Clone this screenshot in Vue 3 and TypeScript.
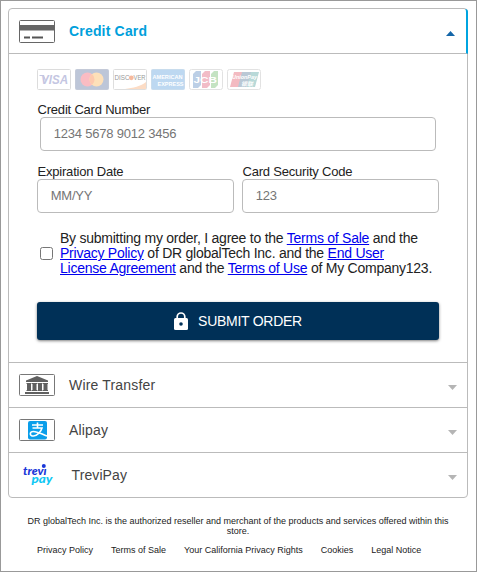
<script setup lang="ts">
import { ref } from 'vue'

const accepted = ref(false)
const links: string[] = [
  'Privacy Policy',
  'Terms of Sale',
  'Your California Privacy Rights',
  'Cookies',
  'Legal Notice',
]
</script>

<template>
  <main class="page">
    <div class="accordion">
      <header class="row active">
        <svg class="method-icon" width="36" height="24" viewBox="0 0 36 24">
          <rect x=".5" y="1.5" width="35" height="22" rx="1" fill="#fff" stroke="#666" />
          <rect x="1" y="6" width="34" height="5.500" fill="#666" />
          <path d="M5 18.500h6M13 18.500h11" stroke="#555" stroke-width="2" />
        </svg>
        <span class="name">Credit Card</span>
        <svg class="arrow" width="9" height="5" viewBox="0 0 9 5"><path d="M4.5 0L9 5H0z" fill="#1466a8" /></svg>
      </header>

      <section class="panel">
        <div class="brands">
          <svg width="34" height="21" viewBox="0 0 34 21">
            <rect x=".5" y=".5" width="33" height="20" rx="1" fill="#fff" stroke="#dcdcdc" />
            <text class="visa" x="4" y="15" textLength="27" lengthAdjust="spacingAndGlyphs">VISA</text>
            <path d="M2.500 6.500h4l2 5" fill="none" stroke="#c4c6e2" stroke-width="1.2" />
          </svg>
          <svg width="34" height="21" viewBox="0 0 34 21">
            <rect x=".5" y=".5" width="33" height="20" rx="1" fill="#bdc6d8" stroke="#c4cad8" />
            <circle cx="12.5" cy="10.5" r="7" fill="#fabcc3" />
            <circle cx="21.5" cy="10.5" r="7" fill="#fde0b9" />
            <path d="M17 5.1a7 7 0 0 1 0 10.8a7 7 0 0 1 0-10.8" fill="#fdc9ae" />
          </svg>
          <svg width="34" height="21" viewBox="0 0 34 21">
            <rect x=".5" y=".5" width="33" height="20" rx="1" fill="#fff" stroke="#dedede" />
            <path d="M33 13C28 17 20 19 12 20h21z" fill="#fcdcc5" />
            <text class="discover" x="1.5" y="11" textLength="15" lengthAdjust="spacingAndGlyphs">DISC</text>
            <circle cx="18.3" cy="8.8" r="2.4" fill="#f6b99d" />
            <text class="discover" x="20.5" y="11" textLength="12" lengthAdjust="spacingAndGlyphs">VER</text>
          </svg>
          <svg width="34" height="21" viewBox="0 0 34 21">
            <rect x=".5" y=".5" width="33" height="20" rx="1" fill="#bdd8f1" stroke="#c8dced" />
            <text class="amex" x="1.5" y="9.5" textLength="30" lengthAdjust="spacingAndGlyphs">AMERICAN</text>
            <text class="amex" x="6.5" y="17" textLength="26" lengthAdjust="spacingAndGlyphs">EXPRESS</text>
          </svg>
          <svg width="34" height="21" viewBox="0 0 34 21">
            <rect x=".5" y=".5" width="33" height="20" rx="2" fill="#fff" stroke="#e2e2e2" />
            <path d="M7 2h5v14l-3 3H4V5z" fill="#bccfe6" />
            <path d="M16 2h5v14l-3 3h-5V5z" fill="#f2bcc7" />
            <path d="M25 2h4v14l-3 3h-4V5z" fill="#c4e3c2" />
            <text class="jcb" x="4.500" y="14" textLength="23.500" lengthAdjust="spacingAndGlyphs">JCB</text>
          </svg>
          <svg width="34" height="21" viewBox="0 0 34 21">
            <rect x=".5" y=".5" width="33" height="20" rx="2" fill="#fff" stroke="#e2e2e2" />
            <path d="M7 3h9l-4 15H3z" fill="#f3bac1" />
            <path d="M15 3h10l-4 15H11z" fill="#bac8d5" />
            <path d="M24 3h8l-4 15h-8z" fill="#b8d9d8" />
            <text class="union" x="5" y="10" textLength="25" lengthAdjust="spacingAndGlyphs">UnionPay</text>
            <text class="union" x="14" y="16.500" textLength="12" lengthAdjust="spacingAndGlyphs">银联</text>
          </svg>
        </div>

        <label class="field number">
          <span>Credit Card Number</span>
          <input type="text" placeholder="1234 5678 9012 3456" />
        </label>
        <div class="pair">
          <label class="field">
            <span>Expiration Date</span>
            <input type="text" placeholder="MM/YY" />
          </label>
          <label class="field">
            <span>Card Security Code</span>
            <input type="text" placeholder="123" />
          </label>
        </div>

        <div class="consent">
          <input v-model="accepted" type="checkbox" />
          <p>
            By submitting my order, I agree to the <a href="#">Terms of Sale</a> and the<br />
            <a href="#">Privacy Policy</a> of DR globalTech Inc. and the <a href="#">End User</a><br />
            <a href="#">License Agreement</a> and the <a href="#">Terms of Use</a> of My Company123.
          </p>
        </div>

        <button class="submit" type="button">
          <svg width="14" height="18" viewBox="0 0 14 18">
            <path d="M3.2 7V4.8a3.8 3.8 0 0 1 7.6 0V7" fill="none" stroke="#fff" stroke-width="1.7" />
            <rect y="6" width="14" height="12" rx="1.5" fill="#fff" />
            <circle cx="7" cy="12" r="1.8" fill="#003057" />
          </svg>
          <span>SUBMIT ORDER</span>
        </button>
      </section>

      <div class="row">
        <svg class="method-icon" width="36" height="22" viewBox="0 0 36 22">
          <rect x=".5" y=".5" width="35" height="21" rx="1" fill="#fff" stroke="#777" />
          <path d="M18 2l11 4.500V8H7V6.500z M7.500 9h5v1H12v6h.5v1h-5v-1H8v-6h-.5z M13 9h5v1h-.5v6h.5v1h-5v-1h.5v-6H13z M18.500 9h5v1H23v6h.5v1h-5v-1h.5v-6h-.5z M24 9h5v1h-.5v6h.5v1h-5v-1h.5v-6H24z M6 18h24v2H6z" fill="#606060" />
        </svg>
        <span class="name">Wire Transfer</span>
        <svg class="arrow" width="9" height="5" viewBox="0 0 9 5"><path d="M0 0H9L4.500 5z" fill="#b5b5b5" /></svg>
      </div>
      <div class="row">
        <svg class="method-icon" width="36" height="22" viewBox="0 0 36 22">
          <rect x=".5" y=".5" width="35" height="21" rx="1" fill="#fff" stroke="#777" />
          <rect x="9" y="2" width="19" height="18.500" rx="2" fill="#0a9eea" />
          <path d="M13 6h11M18.500 3.500V9M13.500 9h9.500C22 12.500 18.500 17 14.500 17c-4.500 0-4-4.500 0-4.500 4 0 8 2.500 13.500 4.500" fill="none" stroke="#fff" stroke-width="1.6" />
        </svg>
        <span class="name">Alipay</span>
        <svg class="arrow" width="9" height="5" viewBox="0 0 9 5"><path d="M0 0H9L4.500 5z" fill="#b5b5b5" /></svg>
      </div>
      <div class="row trevi-row">
        <svg class="method-icon" width="36" height="24" viewBox="0 0 36 24">
          <text class="trevi" x="4" y="12.3" textLength="23.500" lengthAdjust="spacingAndGlyphs">trevı</text>
          <circle cx="24.800" cy="3" r="2" fill="#1937d8" />
          <text class="pay" x="12.500" y="20" textLength="21" lengthAdjust="spacingAndGlyphs">pay</text>
        </svg>
        <span class="name">TreviPay</span>
        <svg class="arrow" width="9" height="5" viewBox="0 0 9 5"><path d="M0 0H9L4.500 5z" fill="#b5b5b5" /></svg>
      </div>
    </div>

    <footer>
      <p>DR globalTech Inc. is the authorized reseller and merchant of the products and services offered within this<br />store.</p>
      <nav><span v-for="link in links" :key="link">{{ link }}</span></nav>
    </footer>
  </main>
</template>

<style>
body {
  margin: 0;
  background: #fff;
}
</style>

<style scoped>
* {
  box-sizing: border-box;
}
.page {
  width: 477px;
  height: 572px;
  padding: 7px 8px 0 7px;
  border: 1px solid #999;
  font-family: "Liberation Sans", Arial, sans-serif;
  color: #222;
  overflow: hidden;
}
.accordion {
  width: 460px;
  height: 490px;
  border: 1px solid #bbb;
  border-radius: 4px;
}
.row {
  display: flex;
  align-items: center;
  height: 45px;
  padding: 0 10px;
  border-top: 1px solid #bbb;
  font-size: 14px;
  color: #444;
}
.active {
  height: 45px;
  margin-right: -1px;
  padding-right: 11px;
  border-top: 0;
  border-bottom: 1px solid #bbb;
  border-right: 2px solid #00a4e0;
  border-top-right-radius: 3px;
}
.method-icon {
  flex: none;
}
.name {
  margin-left: 14px;
  letter-spacing: 0.18px;
}
.active .name {
  font-weight: bold;
  color: #00a0dc;
}
.arrow {
  margin: 5px 0 0 auto;
}
.trevi-row .name {
  margin-left: 16.5px;
  letter-spacing: 0.1px;
}
.panel {
  height: 308px;
  padding: 15px 28px 0;
}
.brands {
  display: flex;
  gap: 4px;
  height: 21px;
}
.brands svg {
  flex: none;
}
.visa {
  font: italic bold 13px "Liberation Sans", sans-serif;
  fill: #c4c6e2;
}
.discover {
  font: 6.5px "Liberation Sans", sans-serif;
  fill: #999;
}
.amex {
  font: bold 6px "Liberation Sans", sans-serif;
  fill: #fff;
}
.jcb {
  font: bold 9px "Liberation Sans", sans-serif;
  fill: #fff;
}
.union {
  font: italic bold 5.5px "Liberation Sans", "Noto Sans CJK SC", sans-serif;
  fill: #fff;
}
.trevi,
.pay {
  font: italic 900 11.5px Lato, sans-serif;
  fill: #1937d8;
}
.pay {
  fill: #12c8f4;
}
.field {
  display: block;
  font-size: 13px;
  letter-spacing: -0.2px;
  line-height: 15px;
}
.field span {
  display: block;
  padding-left: 0.5px;
}
.field input {
  display: block;
  width: 100%;
  height: 34px;
  padding: 0 12.7px 2px;
  border: 1px solid #bbb;
  border-radius: 4px;
  background: #fff;
  font: inherit;
  letter-spacing: inherit;
}
.field input::placeholder {
  color: #757575;
}
.number {
  margin-top: 12px;
}
.number input {
  width: 396px;
  margin-left: 3px;
}
.pair {
  display: grid;
  grid-template-columns: 197px 197px;
  gap: 8px;
  margin-top: 13px;
}
.consent {
  display: flex;
  align-items: center;
  margin-top: 18px;
}
.consent input {
  flex: none;
  width: 13px;
  height: 13px;
  margin: 0 6px 0 3px;
}
.consent p {
  margin: 0 -20px 0 0;
  padding-left: 1px;
  font-size: 14px;
  line-height: 15px;
  letter-spacing: -0.245px;
  white-space: nowrap;
}
.consent a {
  color: #0000ee;
}
.submit {
  display: flex;
  align-items: center;
  justify-content: center;
  gap: 10px;
  width: 402px;
  height: 38px;
  margin-top: 26px;
  padding: 0;
  border: 0;
  border-radius: 3px;
  background: #003057;
  box-shadow: 0 1px 3px rgba(0, 0, 0, 0.5);
  color: #fff;
  font: 14px "Liberation Sans", Arial, sans-serif;
  letter-spacing: -0.27px;
}
footer {
  font-size: 9px;
  line-height: 10px;
  color: #222;
}
footer p {
  margin: 18px 0 0;
  text-align: center;
  white-space: nowrap;
}
nav {
  display: flex;
  gap: 18px;
  margin: 9px 0 0 29px;
  white-space: nowrap;
}
</style>
